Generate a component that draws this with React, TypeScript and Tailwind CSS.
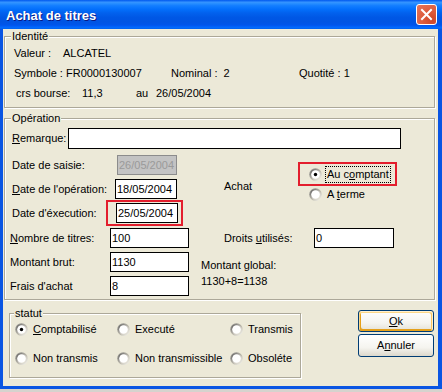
import React from "react";

const U = ({ children }: { children: React.ReactNode }) => <span className="underline underline-offset-[1px]">{children}</span>;

function Group({ label, className, children, labelLeft = "left-[6px]" }: { label: string; className: string; children?: React.ReactNode; labelLeft?: string }) {
  return (
    <div className={`relative border border-[#aca899] shadow-[1px_1px_0_#ffffff,inset_1px_1px_0_#ffffff] ${className}`}>
      <span className={`absolute top-[-7px] ${labelLeft} bg-[#ece9d8] px-px leading-[13px]`}>{label}</span>
      {children}
    </div>
  );
}

function Radio({ checked = false }: { checked?: boolean }) {
  return (
    <svg width="13" height="13" viewBox="0 0 13 13" className="shrink-0">
      <defs>
        <linearGradient id="rgo" x1="0" y1="0" x2="1" y2="1">
          <stop offset="0" stopColor="#7f7f7f" />
          <stop offset="0.55" stopColor="#b8b5a8" />
          <stop offset="1" stopColor="#ffffff" />
        </linearGradient>
        <linearGradient id="rgi" x1="0" y1="0" x2="1" y2="1">
          <stop offset="0" stopColor="#404040" />
          <stop offset="0.6" stopColor="#d4d0c8" />
          <stop offset="1" stopColor="#ece9d8" />
        </linearGradient>
      </defs>
      <circle cx="6.5" cy="6.5" r="6.3" fill="url(#rgo)" />
      <circle cx="6.5" cy="6.5" r="5.3" fill="url(#rgi)" />
      <circle cx="6.5" cy="6.5" r="4.3" fill="#ffffff" />
      {checked && <circle cx="6.5" cy="6.5" r="1.7" fill="#000000" />}
    </svg>
  );
}

function Input({ value = "", w, h = "h-[20px]", disabled = false }: { value?: string; w: string; h?: string; disabled?: boolean }) {
  return (
    <div
      className={`${w} ${h} shrink-0 flex items-center pl-px border leading-[13px] ${
        disabled ? "bg-[#c3c3c3] border-[#8c8c8c] text-[#9a9a9a]" : "bg-white border-black text-black"
      }`}
    >
      {value}
    </div>
  );
}

export default function App() {
  return (
    <div className="w-[442px] h-[392px] bg-[#d6d3ce] font-['Liberation_Sans',Arial,sans-serif] text-[11px] leading-[13px] text-black">
      <div className="h-[389px] flex flex-col">
        {/* Title bar */}
        <div className="h-[29px] shrink-0 flex items-start justify-between bg-[linear-gradient(to_bottom,#0058ee_0%,#3593ff_8%,#288eff_12%,#127dff_20%,#036ffc_32%,#0262ee_44%,#0057e5_60%,#0054e3_76%,#0055eb_86%,#005bf5_90%,#026afe_94%,#0062ef_100%)]">
          <div className="pl-[6px] pt-[8px] text-[13px] leading-[15px] font-bold text-white [text-shadow:1px_1px_#0a1883]">Achat de titres</div>
          <div className="mt-[4px] mr-[5px] w-[21px] h-[21px] rounded-[3px] border border-white bg-[radial-gradient(circle_at_80%_80%,#cc4628_0%,#dc5a3a_40%,#e6765c_100%)] flex items-center justify-center">
            <svg width="13" height="13" viewBox="0 0 13 13">
              <path d="M2 2 L11 11 M11 2 L2 11" stroke="#ffffff" strokeWidth="2" strokeLinecap="square" />
            </svg>
          </div>
        </div>

        {/* Body */}
        <div className="flex-1 flex flex-col bg-[#ece9d8] border-l-[3px] border-r-[4px] border-b-[3px] border-[#0a55e3]">
          {/* Identité */}
          <Group label="Identité" className="mt-[7px] ml-[1px] w-[431px] h-[72px] shrink-0">
            <div className="flex flex-col pt-[10px] gap-[7px]">
              <div className="flex pl-[9px] whitespace-pre">
                <span className="w-[49px]">Valeur :</span>
                <span>ALCATEL</span>
              </div>
              <div className="flex pl-[9px] whitespace-pre">
                <span className="w-[157px]">Symbole : FR0000130007</span>
                <span className="w-[128px]">Nominal :  2</span>
                <span>Quotité : 1</span>
              </div>
              <div className="flex pl-[11px] whitespace-pre">
                <span className="w-[66px]">crs bourse:</span>
                <span className="w-[54px]">11,3</span>
                <span className="w-[20px]">au</span>
                <span>26/05/2004</span>
              </div>
            </div>
          </Group>

          {/* Opération */}
          <Group label="Opération" className="mt-[10px] ml-[1px] w-[431px] h-[182px] shrink-0">
            <div className="flex flex-col">
              {/* Remarque */}
              <div className="mt-[9px] h-[21px] flex items-center">
                <span className="ml-[7px] w-[56px]">
                  <U>R</U>emarque:
                </span>
                <Input w="w-[333px]" h="h-[21px]" />
              </div>

              {/* Dates + Achat */}
              <div className="mt-[6px] flex">
                <div className="flex flex-col">
                  <div className="h-[20px] flex items-center">
                    <span className="ml-[7px] w-[105px]">Date de saisie:</span>
                    <Input w="w-[60px]" value="26/05/2004" disabled />
                  </div>
                  <div className="mt-[4px] h-[20px] flex items-center">
                    <span className="ml-[7px] w-[103px]">
                      <U>D</U>ate de l'opération:
                    </span>
                    <Input w="w-[62px]" value="18/05/2004" />
                  </div>
                  <div className="mt-[1px] h-[26px] flex items-center">
                    <span className="ml-[7px] w-[94px]">Date d'éxecution:</span>
                    <div className="w-[77px] h-[26px] border-2 border-[#e31e2d] pl-[8px] pt-px">
                      <Input w="w-[62px]" value="25/05/2004" />
                    </div>
                  </div>
                </div>
                <div className="flex">
                  <span className="ml-[41px] mt-[25px] w-[74px]">Achat</span>
                  <div className="flex flex-col mt-[7px]">
                    <div className="w-[99px] h-[24px] border-2 border-[#e31e2d] pl-[9px] flex items-center">
                      <Radio checked />
                      <span className="ml-[3px] border border-dotted border-black px-px h-[17px] flex items-center">
                        Au c<U>o</U>mptant
                      </span>
                    </div>
                    <div className="mt-[2px] h-[13px] pl-[11px] flex items-center">
                      <Radio />
                      <span className="ml-[3px] border border-transparent px-px">
                        A <U>t</U>erme
                      </span>
                    </div>
                  </div>
                </div>
              </div>

              {/* Nombre / Droits */}
              <div className="mt-[2px] h-[20px] flex items-center">
                <span className="ml-[5px] w-[100px]">
                  <U>N</U>ombre de titres:
                </span>
                <Input w="w-[79px]" value="100" />
                <span className="ml-[35px] w-[90px]">
                  Droits <U>u</U>tilisés:
                </span>
                <Input w="w-[80px]" value="0" />
              </div>

              {/* Montant / Frais */}
              <div className="flex">
                <div className="flex flex-col">
                  <div className="mt-[4px] h-[20px] flex items-center">
                    <span className="ml-[5px] w-[100px]">Montant brut:</span>
                    <Input w="w-[79px]" value="1130" />
                  </div>
                  <div className="mt-[4px] h-[20px] flex items-center">
                    <span className="ml-[5px] w-[100px]">Frais d'achat</span>
                    <Input w="w-[79px]" value="8" />
                  </div>
                </div>
                <div className="ml-[12px] mt-[11px] flex flex-col gap-[3px]">
                  <span>Montant global:</span>
                  <span>1130+8=1138</span>
                </div>
              </div>
            </div>
          </Group>

          {/* Bottom row */}
          <div className="mt-[10px] flex items-start">
            <Group label="statut" labelLeft="left-[4px]" className="ml-[6px] mt-[3px] w-[292px] h-[65px] shrink-0">
              <div className="flex flex-col pt-[9px] gap-[16px]">
                <div className="flex h-[13px] items-center pl-[5px]">
                  <div className="w-[102px] flex items-center gap-[5px]">
                    <Radio checked />
                    <span>
                      <U>C</U>omptabilisé
                    </span>
                  </div>
                  <div className="w-[113px] flex items-center gap-[5px]">
                    <Radio />
                    <span>Executé</span>
                  </div>
                  <div className="flex items-center gap-[5px]">
                    <Radio />
                    <span>Transmis</span>
                  </div>
                </div>
                <div className="flex h-[13px] items-center pl-[5px]">
                  <div className="w-[102px] flex items-center gap-[5px]">
                    <Radio />
                    <span>Non transmis</span>
                  </div>
                  <div className="w-[113px] flex items-center gap-[5px]">
                    <Radio />
                    <span>Non transmissible</span>
                  </div>
                  <div className="flex items-center gap-[5px]">
                    <Radio />
                    <span>Obsoléte</span>
                  </div>
                </div>
              </div>
            </Group>
            <div className="ml-[57px] flex flex-col gap-[2px]">
              <div className="w-[76px] h-[22px] rounded-[3px] border border-[#003c74] bg-[linear-gradient(to_bottom,#ffffff_0%,#f5f4ef_60%,#e3e0d5_100%)] shadow-[inset_-1px_1px_#fff0cf,inset_1px_2px_#fdd889,inset_-2px_2px_#fbc761,inset_2px_-2px_#e5a01a] flex items-center justify-center">
                <span>
                  <U>O</U>k
                </span>
              </div>
              <div className="w-[76px] h-[23px] rounded-[3px] border border-[#003c74] bg-[linear-gradient(to_bottom,#ffffff_0%,#f5f4ef_60%,#dcd8cc_100%)] flex items-center justify-center">
                <span>
                  A<U>n</U>nuler
                </span>
              </div>
            </div>
          </div>
        </div>
      </div>
    </div>
  );
}
